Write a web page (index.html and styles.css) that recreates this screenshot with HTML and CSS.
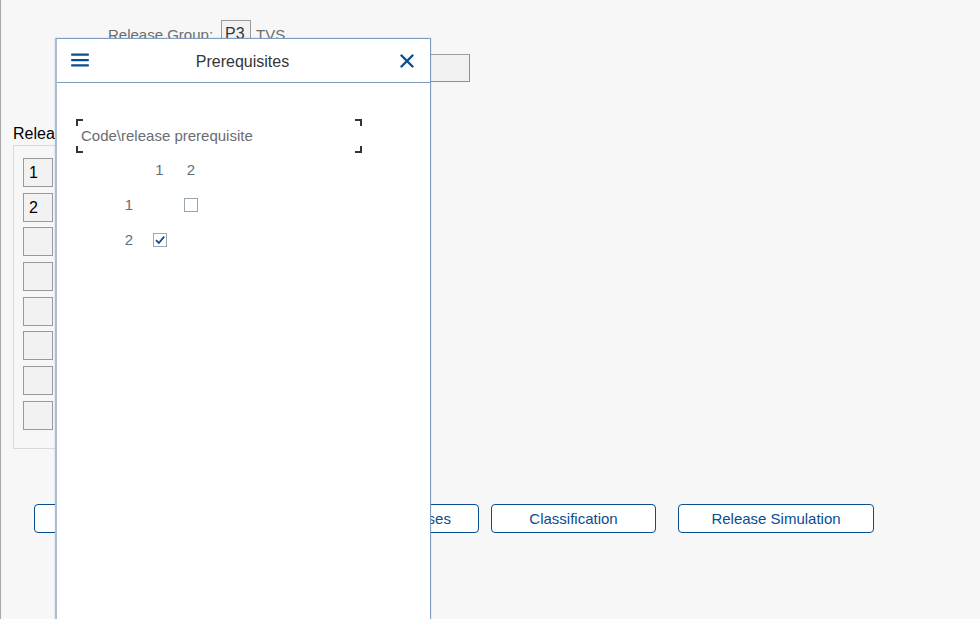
FILE: index.html
```html
<!DOCTYPE html>
<html>
<head>
<meta charset="utf-8">
<link rel="stylesheet" href="styles.css">
</head>
<body>
<div class="page">
  <div class="rg-row">
    <span class="rg-label">Release Group:</span>
    <span class="code-box">P3</span>
    <span class="rg-label">TVS</span>
  </div>
  <div class="field-row"><span class="field"></span></div>
  <div class="rel-label">Relea</div>
  <div class="group">
    <span class="cell">1</span>
    <span class="cell">2</span>
    <span class="cell"></span>
    <span class="cell"></span>
    <span class="cell"></span>
    <span class="cell"></span>
    <span class="cell"></span>
    <span class="cell"></span>
  </div>
  <div class="btn-row">
    <button class="btn b1">Release Codes</button>
    <button class="btn b2">Display All Release Statuses</button>
    <button class="btn b3">Classification</button>
    <button class="btn b4">Release Simulation</button>
  </div>

  <div class="dialog">
    <div class="dlg-head">
      <svg class="ham" width="18" height="14" viewBox="0 0 18 14">
        <rect x="0" y="0.5" width="18" height="2.2" rx="1" fill="#0a4d8f"/>
        <rect x="0" y="6" width="18" height="2.2" rx="1" fill="#0a4d8f"/>
        <rect x="0" y="11.3" width="18" height="2.2" rx="1" fill="#0a4d8f"/>
      </svg>
      <span class="dlg-title">Prerequisites</span>
      <svg class="close" width="14" height="14" viewBox="0 0 14 14">
        <path d="M1.5 1.5 L12.5 12.5 M12.5 1.5 L1.5 12.5" stroke="#0a4d8f" stroke-width="2.4" stroke-linecap="round"/>
      </svg>
    </div>
    <div class="dlg-body">
      <div class="frame">
        <span class="corner tl"></span><span class="corner tr"></span>
        <span class="corner bl"></span><span class="corner br"></span>
        <span class="frame-text">Code\release prerequisite</span>
      </div>
      <div class="matrix">
        <span></span><span class="num">1</span><span class="num">2</span>
        <span class="num">1</span><span></span><span class="chk-cell"><span class="chk"></span></span>
        <span class="num">2</span><span class="chk-cell"><span class="chk on">
          <svg width="12" height="12" viewBox="0 0 12 12"><path d="M2 6.2 L4.8 9 L10.2 2.6" fill="none" stroke="#0a4d8f" stroke-width="1.8"/></svg>
        </span></span><span></span>
      </div>
    </div>
  </div>
</div>
</body>
</html>
```

FILE: styles.css
```css
html, body {
  margin: 0;
  padding: 0;
}
body {
  background: #f7f7f7;
  font-family: "Liberation Sans", Arial, sans-serif;
  overflow: hidden;
}
.page {
  position: relative;
  width: 979px;
  height: 619px;
  border-left: 1px solid #a8a8a8;
  padding-top: 20px;
  box-sizing: border-box;
  overflow: hidden;
}
.rg-row {
  display: flex;
  align-items: center;
  margin-left: 107px;
  height: 28px;
}
.rg-label {
  color: #6a6d70;
  font-size: 15px;
}
.code-box {
  width: 30px;
  height: 28px;
  box-sizing: border-box;
  border: 1px solid #9a9a9a;
  background: #f2f2f2;
  color: #32363a;
  font-size: 16px;
  line-height: 26px;
  padding-left: 3px;
  margin: 0 5px 0 8px;
}
.field-row {
  margin-top: 6px;
  margin-left: 399px;
  height: 28px;
}
.field {
  display: block;
  width: 70px;
  height: 28px;
  box-sizing: border-box;
  border: 1px solid #8e8e8e;
  border-top-color: #a0a0a0;
  background: #f2f2f2;
}
.rel-label {
  margin-top: 42px;
  margin-left: 12px;
  font-size: 16px;
  line-height: 20px;
  color: #000;
}
.group {
  margin-top: 1px;
  margin-left: 12px;
  width: 300px;
  height: 304px;
  box-sizing: border-box;
  border: 1px solid #d9d9d9;
  padding: 12px 0 0 9px;
  display: flex;
  flex-direction: column;
  gap: 5.7px;
}
.cell {
  display: block;
  width: 30px;
  height: 29px;
  box-sizing: border-box;
  border: 1px solid #9a9a9a;
  background: #f2f2f2;
  font-size: 16px;
  line-height: 27px;
  padding-left: 5px;
  color: #000;
}
.btn-row {
  display: flex;
  margin-top: 55px;
  margin-left: 33px;
}
.btn {
  height: 29px;
  box-sizing: border-box;
  border: 1px solid #0a4d8f;
  border-radius: 4px;
  background: #fff;
  color: #0a4d8f;
  font-family: "Liberation Sans", Arial, sans-serif;
  font-size: 15px;
  padding: 0;
}
.b1 { width: 180px; }
.b2 { width: 253px; margin-left: 12px; padding-left: 6px; }
.b3 { width: 165px; margin-left: 12px; }
.b4 { width: 196px; margin-left: 22px; }

.dialog {
  position: absolute;
  left: 54px;
  top: 38px;
  width: 376px;
  height: 600px;
  box-sizing: border-box;
  background: #fff;
  border: 1px solid #7f9bbd;
  border-left: 2px solid #a9bcd4;
  box-shadow: 0 0 2px rgba(80, 110, 150, 0.25);
}
.dlg-head {
  height: 44px;
  box-sizing: border-box;
  border-bottom: 1px solid #7f9bbd;
  display: flex;
  align-items: center;
  padding: 2px 16px 0 14px;
}
.ham { display: block; margin-top: -3px; }
.dlg-title {
  flex: 1;
  text-align: center;
  font-size: 16px;
  color: #32363a;
  padding-right: 4px;
}
.close { display: block; margin-top: -2px; }
.dlg-body {
  padding: 36px 0 0 19px;
}
.frame {
  position: relative;
  width: 286px;
  height: 34px;
  display: flex;
  align-items: center;
  padding-left: 5px;
  box-sizing: border-box;
}
.frame-text {
  color: #6a6d70;
  font-size: 15px;
  margin-top: -1px;
}
.corner {
  position: absolute;
  width: 5px;
  height: 5px;
  border-color: #32363a;
  border-style: solid;
  border-width: 0;
}
.tl { left: 0; top: 0; border-top-width: 2px; border-left-width: 2px; }
.tr { right: 0; top: 0; border-top-width: 2px; border-right-width: 2px; }
.bl { left: 0; bottom: 0; border-bottom-width: 2px; border-left-width: 2px; }
.br { right: 0; bottom: 0; border-bottom-width: 2px; border-right-width: 2px; }
.matrix {
  display: grid;
  grid-template-columns: 22px 39px 24px;
  grid-auto-rows: 35px;
  margin-left: 42px;
  margin-top: -1px;
}
.num {
  display: flex;
  align-items: center;
  justify-content: center;
  color: #6a6d70;
  font-size: 15px;
}
.chk-cell {
  display: flex;
  align-items: center;
  justify-content: center;
}
.chk {
  display: flex;
  align-items: center;
  justify-content: center;
  width: 14px;
  height: 14px;
  box-sizing: border-box;
  border: 1px solid #9aa6b4;
  background: #fff;
}
```
